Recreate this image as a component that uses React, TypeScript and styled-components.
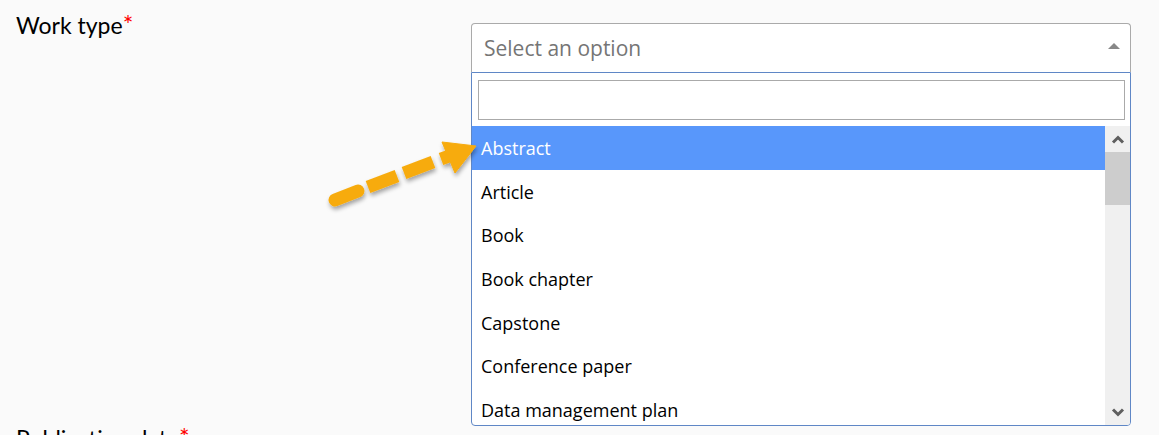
import styled, { createGlobalStyle } from 'styled-components';

const GlobalStyle = createGlobalStyle`
  html, body {
    margin: 0;
    padding: 0;
    background: #fafafa;
  }
  body {
    overflow: hidden;
  }
`;

const workTypes = [
  'Abstract',
  'Article',
  'Book',
  'Book chapter',
  'Capstone',
  'Conference paper',
  'Data management plan',
  'Dataset',
];

const App = () => {
  return (
    <>
      <GlobalStyle />
      <S.Page>
        <S.FieldRow>
          <S.Label>
            Work type<S.Required>*</S.Required>
          </S.Label>
          <S.Field>
            <S.Select>
              <S.Placeholder>Select an option</S.Placeholder>
              <S.Caret />
            </S.Select>
            <S.Dropdown>
              <S.SearchWrap>
                <S.Search type="text" />
              </S.SearchWrap>
              <S.ListArea>
                <S.Options>
                  {workTypes.map((t, i) => (
                    <S.Option key={t} $active={i === 0}>
                      {t}
                    </S.Option>
                  ))}
                </S.Options>
                <S.Scrollbar>
                  <S.ScrollButton>
                    <svg width="14" height="9" viewBox="0 0 14 9">
                      <polyline points="2,7.5 7,2.5 12,7.5" fill="none" stroke="#5f5f5f" strokeWidth="3" />
                    </svg>
                  </S.ScrollButton>
                  <S.Thumb />
                  <S.Track />
                  <S.ScrollButton>
                    <svg width="14" height="9" viewBox="0 0 14 9">
                      <polyline points="2,1.5 7,6.5 12,1.5" fill="none" stroke="#5f5f5f" strokeWidth="3" />
                    </svg>
                  </S.ScrollButton>
                </S.Scrollbar>
              </S.ListArea>
            </S.Dropdown>
          </S.Field>
        </S.FieldRow>
        <S.FieldRow $gap={-4}>
          <S.Label>
            Publication date<S.Required>*</S.Required>
          </S.Label>
        </S.FieldRow>
      </S.Page>
      <S.Annotation width="1159" height="435" viewBox="0 0 1159 435">
        <defs>
          <filter id="shadow" x="-20%" y="-40%" width="140%" height="180%">
            <feDropShadow dx="1" dy="3" stdDeviation="2" floodColor="#000" floodOpacity="0.35" />
          </filter>
        </defs>
        <g filter="url(#shadow)" fill="#f7ab0d" stroke="#f7ab0d">
          <line x1="335" y1="200" x2="358" y2="191" strokeWidth="13" strokeLinecap="round" />
          <line x1="368" y1="187" x2="397" y2="176" strokeWidth="13" />
          <line x1="404" y1="173" x2="433" y2="162" strokeWidth="13" />
          <line x1="441" y1="159" x2="452" y2="155" strokeWidth="13" />
          <polygon points="476,146 442,142 455,173" strokeWidth="1" strokeLinejoin="round" />
        </g>
      </S.Annotation>
    </>
  );
};
export default App;

const S = {
  Page: styled.div`
    display: flex;
    flex-direction: column;
    padding: 9px 28px 0 16px;
    height: 435px;
    box-sizing: border-box;
    overflow: hidden;
  `,
  FieldRow: styled.div<{ $gap?: number }>`
    display: grid;
    grid-template-columns: 455px 660px;
    flex-shrink: 0;
    margin-top: ${(p) => p.$gap ?? 0}px;
  `,
  Label: styled.div`
    font-family: Lato, 'Noto Sans', sans-serif;
    font-size: 23px;
    line-height: 1.2;
    color: #000;
  `,
  Required: styled.span`
    color: #ff0000;
    font-size: 25px;
  `,
  Field: styled.div`
    display: flex;
    flex-direction: column;
    margin-top: 14px;
  `,
  Select: styled.div`
    display: flex;
    align-items: center;
    justify-content: space-between;
    height: 49px;
    box-sizing: border-box;
    padding: 0 10px 0 12px;
    background: #fff;
    border: 1px solid #aaa;
    border-bottom: none;
    border-radius: 4px 4px 0 0;
  `,
  Placeholder: styled.span`
    font-family: 'Open Sans', sans-serif;
    font-size: 21px;
    color: #757575;
  `,
  Caret: styled.span`
    width: 0;
    height: 0;
    margin-bottom: 4px;
    border-left: 6px solid transparent;
    border-right: 6px solid transparent;
    border-bottom: 6px solid #888;
  `,
  Dropdown: styled.div`
    display: flex;
    flex-direction: column;
    background: #fff;
    border: 1px solid #5f87c6;
    border-radius: 0 0 4px 4px;
    overflow: hidden;
  `,
  SearchWrap: styled.div`
    padding: 7px 5px 6px 6px;
  `,
  Search: styled.input`
    display: block;
    width: 100%;
    height: 40px;
    box-sizing: border-box;
    margin: 0;
    border: 1px solid #aaa;
    background: #fff;
    outline: none;
  `,
  ListArea: styled.div`
    display: flex;
    height: 299px;
  `,
  Options: styled.div`
    flex: 1;
    overflow: hidden;
  `,
  Option: styled.div<{ $active?: boolean }>`
    display: flex;
    align-items: center;
    height: 43.7px;
    padding-left: 9px;
    font-family: 'Open Sans', sans-serif;
    font-size: 18px;
    color: ${(p) => (p.$active ? '#fff' : '#000')};
    background: ${(p) => (p.$active ? '#5897fb' : 'transparent')};
  `,
  Scrollbar: styled.div`
    display: flex;
    flex-direction: column;
    width: 25px;
    background: #f0f0f0;
  `,
  ScrollButton: styled.div`
    display: flex;
    align-items: center;
    justify-content: center;
    height: 26px;
    flex-shrink: 0;
  `,
  Thumb: styled.div`
    height: 53px;
    background: #cdcdcd;
  `,
  Track: styled.div`
    flex: 1;
  `,
  Annotation: styled.svg`
    position: absolute;
    top: 0;
    left: 0;
    pointer-events: none;
  `,
};
